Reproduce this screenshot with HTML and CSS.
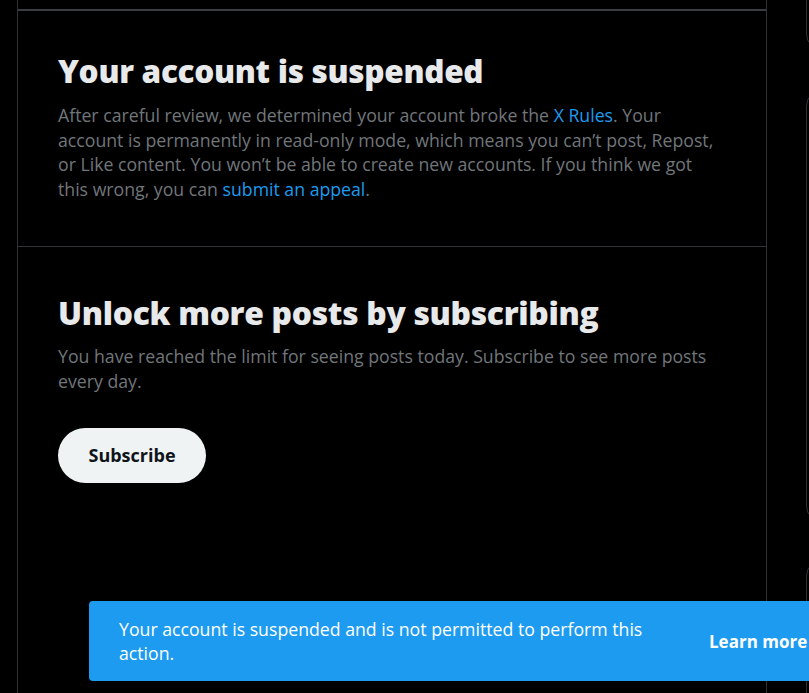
FILE: index.html
```html
<!DOCTYPE html>
<html lang="en">
<head>
<meta charset="utf-8">
<title>Account suspended</title>
<link rel="stylesheet" href="styles.css">
</head>
<body>
<div class="layout">
  <main class="main">
    <div class="topbar"></div>
    <section class="panel panel-suspended">
      <h1 class="panel-title">Your account is suspended</h1>
      <p class="panel-text">After careful review, we determined your account broke the <a class="link" href="#">X Rules</a>. Your account is permanently in read-only mode, which means you can’t post, Repost, or Like content. You won’t be able to create new accounts. If you think we got this wrong, you can <a class="link" href="#">submit an appeal</a>.</p>
    </section>
    <section class="panel panel-subscribe">
      <h2 class="panel-title title-wide">Unlock more posts by subscribing</h2>
      <p class="panel-text">You have reached the limit for seeing posts today. Subscribe to see more posts every day.</p>
      <button class="btn-subscribe" type="button">Subscribe</button>
    </section>
  </main>
  <aside class="sidebar">
    <div class="side-card card-a"></div>
    <div class="side-card card-b"></div>
    <div class="side-card card-c"></div>
  </aside>
</div>
<div class="toast" role="alert">
  <span class="toast-text">Your account is suspended and is not permitted to perform this action.</span>
  <a class="toast-action" href="#">Learn more</a>
</div>
</body>
</html>
```

FILE: styles.css
```css
* { box-sizing: border-box; }
html, body { margin: 0; padding: 0; background: #000; }
body {
  font-family: "Open Sans", "Liberation Sans", Arial, sans-serif;
  color: #e7e9ea;
  overflow: hidden;
  height: 693px;
}
.layout {
  display: flex;
  align-items: flex-start;
  padding-left: 17px;
  height: 693px;
}
.main {
  width: 750px;
  flex: none;
  height: 693px;
  border-left: 1px solid #2f3336;
  border-right: 1px solid #2f3336;
}
.topbar {
  height: 11px;
  border-bottom: 2px solid #3a3e42;
}
.panel {
  padding: 0 40px;
}
.panel-suspended {
  padding-top: 42px;
  padding-bottom: 45px;
  border-bottom: 1px solid #2f3336;
}
.panel-subscribe {
  padding-top: 48px;
}
.panel-title {
  margin: 0;
  font-family: "Open Sans", sans-serif;
  font-weight: 800;
  font-size: 31.5px;
  line-height: 36px;
  letter-spacing: -0.3px;
  color: #e7e9ea;
}
.title-wide { font-size: 31.8px; }
.panel-text {
  margin: 14px 0 0;
  font-size: 17.7px;
  line-height: 24.6px;
  color: #71767b;
}
.panel-subscribe .panel-text { margin-top: 13px; }
.link { color: #1d9bf0; text-decoration: none; }
.btn-subscribe {
  margin-top: 34px;
  width: 148px;
  height: 55px;
  border: none;
  border-radius: 28px;
  background: #eff3f4;
  color: #0f1419;
  font-family: "Open Sans", sans-serif;
  font-weight: 700;
  font-size: 18px;
  padding: 0;
  display: block;
}
.sidebar {
  margin-left: 39px;
  width: 350px;
  flex: none;
  display: flex;
  flex-direction: column;
}
.side-card {
  border: 1px solid #2f3336;
  border-radius: 16px;
}
.card-a { height: 100px; margin-top: -50px; }
.card-b { height: 432px; margin-top: 40px; }
.card-c { height: 300px; margin-top: 38px; }
.toast {
  position: fixed;
  left: 89px;
  top: 601px;
  width: 760px;
  height: 80px;
  background: #1d9bf0;
  border-radius: 4px;
  display: flex;
  align-items: center;
  padding: 0 30px;
  gap: 30px;
}
.toast-text {
  flex: none;
  width: 560px;
  font-size: 17.7px;
  line-height: 24px;
  color: #fff;
}
.toast-action {
  color: #fff;
  font-weight: 700;
  font-size: 17px;
  text-decoration: none;
  white-space: nowrap;
}
```
